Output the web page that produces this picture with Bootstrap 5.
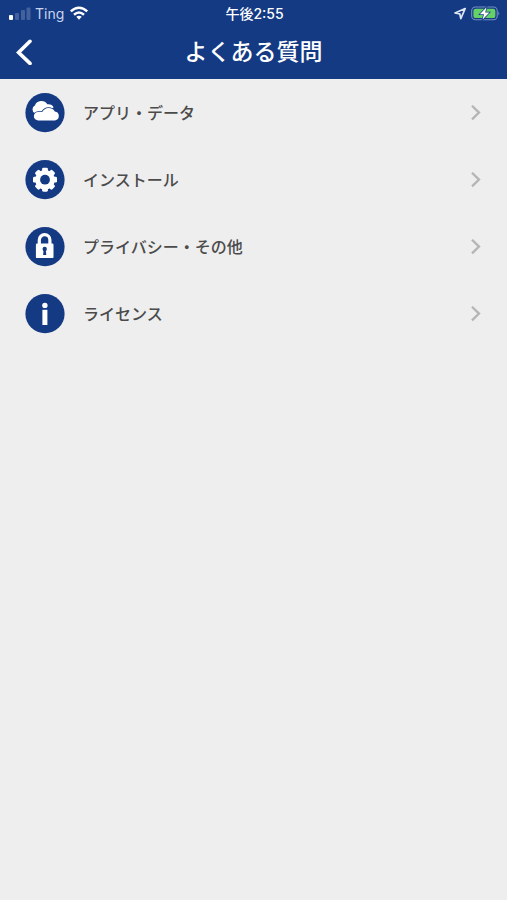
<!DOCTYPE html>
<html lang="ja">
<head>
<meta charset="utf-8">
<meta name="viewport" content="width=device-width, initial-scale=1">
<title>よくある質問</title>
<link href="https://cdn.jsdelivr.net/npm/bootstrap@5.3.0/dist/css/bootstrap.min.css" rel="stylesheet">
<style>
:root { --navy: #143a84; }
body { background: #eee; font-family: Inter, "Noto Sans CJK JP", sans-serif; }
.top-area { background: var(--navy); }
.status-row { height: 27px; padding: 0 7px 0 9px; font-size: 14px; line-height: 27px; }
.carrier { font-weight: 400; color: #c9d5ec; }
.clock { font-weight: 500; }
.clock-kanji { font-family: "Noto Sans CJK JP", sans-serif; font-weight: 500; }
.title-row { height: 52px; padding: 0 12px; }
.title-row h1 { font-family: "Noto Sans CJK JP", sans-serif; font-size: 23px; line-height: 46px; font-weight: 500; }
.side { width: 32px; }
.back-btn { height: 48px; width: 32px; }
.faq-item { height: 67px; padding: 0 26px 0 25px; gap: 18px; color: #4b4b4b; font-family: "Noto Sans CJK JP", sans-serif; font-size: 16px; line-height: 24px; font-weight: 500; background: transparent; }
.faq-item:hover { background: #e4e4e4; }
.faq-label { padding-bottom: 2px; }
svg { display: block; flex: none; }
</style>
</head>
<body>
<header class="top-area text-white">
  <div class="status-row row g-0 align-items-center">
    <div class="col d-flex align-items-center">
      <svg class="me-1" width="22" height="14" viewBox="0 0 22 14" fill="#fff" aria-hidden="true">
        <rect x="0" y="8" width="4" height="5" rx="1"/>
        <g fill-opacity=".2"><rect x="6" y="6" width="4" height="7" rx="1"/><rect x="12" y="3" width="4" height="10" rx="1"/><rect x="17.5" y="0.5" width="4" height="12.5" rx="1"/></g>
      </svg>
      <span class="carrier">Ting</span>
      <svg class="ms-1" width="22" height="15" viewBox="0 0 22 15" fill="none" stroke="#fff" stroke-width="2.5" aria-hidden="true">
        <path d="M2.8 5.4Q11-2 19.2 5.4M6 8.7Q11 4.3 16 8.7"/><path d="M8.3 10.7Q11 8.6 13.7 10.7L11 13.7Z" fill="#fff" stroke="none"/>
      </svg>
    </div>
    <div class="col-auto clock"><span class="clock-kanji">午後</span>2:55</div>
    <div class="col d-flex align-items-center justify-content-end gap-1">
      <svg width="13" height="13" viewBox="0 0 13 13" fill="none" stroke="#dfe7f5" stroke-width="1.7" stroke-linejoin="round" aria-hidden="true"><path d="M11.2 1.5L1 6L5.8 6.9L6.8 11.7Z"/></svg>
      <svg width="29" height="15" viewBox="0 0 29 15" aria-hidden="true">
        <rect x=".7" y="1" width="25.5" height="12.8" rx="3.8" fill="none" stroke="#7690c0" stroke-width="1.1"/>
        <rect x="2.4" y="2.7" width="22" height="9.4" rx="2.2" fill="#65d267"/>
        <path d="M27.4 5.2Q29.2 7.4 27.4 9.6Z" fill="#7690c0"/>
        <path d="M15.5 1.2L8.8 8.2H13L11.6 13.6L18.4 6.5H14.2Z" fill="#fff" stroke="#143a84" stroke-width="1.4" paint-order="stroke"/>
      </svg>
    </div>
  </div>
  <div class="title-row d-flex align-items-start justify-content-between">
    <div class="side">
      <button type="button" class="back-btn btn p-0 border-0 d-flex align-items-center" aria-label="戻る">
        <svg width="24" height="28" viewBox="0 0 24 28" fill="none" stroke="#fff" stroke-width="3.6" stroke-linecap="round" stroke-linejoin="miter"><path d="M18 4.3L6.6 15.5L18 26.4"/></svg>
      </button>
    </div>
    <h1 class="m-0 text-center">よくある質問</h1>
    <div class="side"></div>
  </div>
</header>
<main>
  <nav class="list-group list-group-flush" aria-label="よくある質問">
    <a href="#app" class="faq-item d-flex align-items-center text-decoration-none">
      <svg width="40" height="40" viewBox="0 0 40 40" aria-hidden="true"><circle cx="20" cy="19.7" r="19.6" fill="#143a84"/>
        <path d="M10 20.3A4.4 4.4 0 0 1 9.9 12.4A7 7 0 0 1 22.3 11.3Q27 10.8 28.6 14.5L22 18L14 20.3Z" fill="#fff"/>
        <path d="M13.3 27.5A4.3 4.3 0 0 1 13 18.9H17.2A7.3 7.3 0 0 1 29.8 18.4A4.6 4.6 0 0 1 30 27.5Z" fill="#fff" stroke="#143a84" stroke-width="1.5" paint-order="stroke"/></svg>
      <span class="faq-label flex-grow-1">アプリ・データ</span>
      <svg width="10" height="16" viewBox="0 0 10 16" fill="none" stroke="#b5b5b5" stroke-width="2.3" aria-hidden="true"><path d="M1 .8L8 7.6L1 14.4"/></svg>
    </a>
    <a href="#install" class="faq-item d-flex align-items-center text-decoration-none">
      <svg width="40" height="40" viewBox="0 0 40 40" aria-hidden="true"><circle cx="20" cy="19.7" r="19.6" fill="#143a84"/>
        <g transform="translate(20 19.7)" fill="#fff"><circle r="9.8"/>
          <g id="teeth"><rect x="-2.9" y="-12" width="5.8" height="24" rx="1.4"/><rect x="-12" y="-2.9" width="24" height="5.8" rx="1.4"/></g>
          <use href="#teeth" transform="rotate(45)"/><circle r="4.9" fill="#143a84"/></g></svg>
      <span class="faq-label flex-grow-1">インストール</span>
      <svg width="10" height="16" viewBox="0 0 10 16" fill="none" stroke="#b5b5b5" stroke-width="2.3" aria-hidden="true"><path d="M1 .8L8 7.6L1 14.4"/></svg>
    </a>
    <a href="#privacy" class="faq-item d-flex align-items-center text-decoration-none">
      <svg width="40" height="40" viewBox="0 0 40 40" aria-hidden="true"><circle cx="20" cy="19.7" r="19.6" fill="#143a84"/>
        <path d="M14.3 18V13A5.3 5.3 0 0 1 24.9 13V18" fill="none" stroke="#fff" stroke-width="3.2"/>
        <rect x="10.9" y="16.6" width="17.6" height="14.5" rx="1.2" fill="#fff"/>
        <circle cx="19.7" cy="22" r="2.2" fill="#143a84"/><path d="M18.7 22H20.7L21.3 28H18.1Z" fill="#143a84"/></svg>
      <span class="faq-label flex-grow-1">プライバシー・その他</span>
      <svg width="10" height="16" viewBox="0 0 10 16" fill="none" stroke="#b5b5b5" stroke-width="2.3" aria-hidden="true"><path d="M1 .8L8 7.6L1 14.4"/></svg>
    </a>
    <a href="#license" class="faq-item d-flex align-items-center text-decoration-none">
      <svg width="40" height="40" viewBox="0 0 40 40" aria-hidden="true"><circle cx="20" cy="19.7" r="19.6" fill="#143a84"/>
        <circle cx="19.9" cy="11.4" r="2.7" fill="#fff"/><rect x="17.4" y="15.8" width="5" height="15.2" fill="#fff"/></svg>
      <span class="faq-label flex-grow-1">ライセンス</span>
      <svg width="10" height="16" viewBox="0 0 10 16" fill="none" stroke="#b5b5b5" stroke-width="2.3" aria-hidden="true"><path d="M1 .8L8 7.6L1 14.4"/></svg>
    </a>
  </nav>
</main>
<script src="https://cdn.jsdelivr.net/npm/bootstrap@5.3.0/dist/js/bootstrap.bundle.min.js"></script>
</body>
</html>
